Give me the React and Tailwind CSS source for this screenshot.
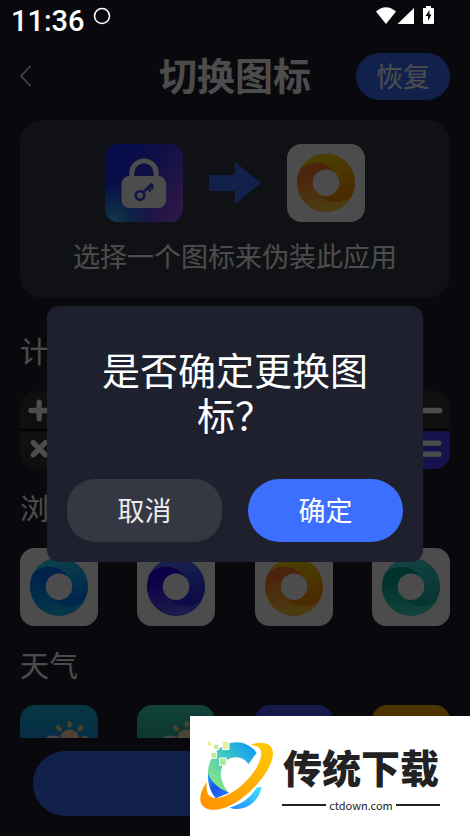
import React, {useId} from "react";

const browserIcons = [
    {name: "蓝色", from: "#22d0f8", to: "#0080ff", innerFrom: "#0074ff", innerTo: "#14bbf5"},
    {name: "紫色", from: "#5070ff", to: "#2a22f0", innerFrom: "#2400f0", innerTo: "#645dff"},
    {name: "橙色", from: "#f7d000", to: "#fd8c00", innerFrom: "#ff7a30", innerTo: "#ffcc38"},
    {name: "青色", from: "#3cdcd6", to: "#14b0aa", innerFrom: "#00a592", innerTo: "#3ce0cc"},
];

const weatherIcons = [
    {name: "蓝色", from: "#1ab8e8", to: "#1488e0"},
    {name: "绿色", from: "#3cdcc0", to: "#20b090"},
    {name: "紫色", from: "#5057fd", to: "#3038e0"},
    {name: "黄色", from: "#fdb400", to: "#f09000"},
];

function RingIcon({icon}) {
    const id = useId();

    return (
        <svg viewBox="0 0 236 236" className="block w-full">
            <defs>
                <linearGradient id={`${id}a`} x1="0.4" y1="0" x2="0.7" y2="1">
                    <stop offset="0.1" stopColor={icon.from}/>
                    <stop offset="0.8" stopColor={icon.to}/>
                </linearGradient>
                <linearGradient id={`${id}b`} x1="0.3" y1="0.1" x2="0.5" y2="1">
                    <stop offset="0.1" stopColor={icon.innerFrom}/>
                    <stop offset="1" stopColor={icon.innerTo}/>
                </linearGradient>
            </defs>
            <rect width="236" height="236" rx="44" fill="#fff"/>
            <circle cx="118" cy="117" r="88" fill={`url(#${id}a)`}/>
            <path d="M40 76C66 50 122 46 150 93L118 117L90 146C112 180 165 187 197 156A88 88 0 0 1 40 76Z" fill={`url(#${id}b)`}/>
            <circle cx="118" cy="117" r="40" fill="#fff"/>
        </svg>
    );
}

function WeatherIcon({icon}) {
    const id = useId();

    return (
        <svg viewBox="0 0 236 236" className="block w-full">
            <defs>
                <linearGradient id={id} x1="0" y1="0" x2="0" y2="1">
                    <stop offset="0" stopColor={icon.from}/>
                    <stop offset="0.6" stopColor={icon.to}/>
                </linearGradient>
            </defs>
            <rect width="236" height="236" rx="46" fill={`url(#${id})`}/>
            <g stroke="#ffd98a" strokeWidth="12" strokeLinecap="round">
                <path d="M150 55V62M115 67L121 74M186 67L179 74M192 100H200"/>
            </g>
            <circle cx="150" cy="103" r="29" fill="#ffe2ae"/>
            <path d="M52 160a32 32 0 0 1 14-45a36 36 0 0 1 66-2a40 40 0 0 1 52 40a24 24 0 0 1-14 40H80a28 28 0 0 1-28-33Z" fill="#f0f0f2"/>
        </svg>
    );
}

function CalculatorIcon() {
    const id = useId();

    return (
        <svg viewBox="0 0 236 236" className="block w-full">
            <clipPath id={id}>
                <rect width="236" height="236" rx="46"/>
            </clipPath>
            <g clipPath={`url(#${id})`}>
                <rect width="236" height="236" fill="#0a0a0a"/>
                <path d="M0 0H236V114H0ZM0 122H114V236H0Z" fill="#343434"/>
                <path d="M122 122H236V236H122Z" fill="#4a3fff"/>
                <g stroke="#fff" strokeWidth="16" strokeLinecap="round">
                    <path d="M58 34V84M33 59H83M153 59H205M40 156L77 193M77 156L40 193M155 158H202M155 191H202"/>
                </g>
            </g>
        </svg>
    );
}

function LockIcon() {
    return (
        <svg viewBox="0 0 236 236" className="block w-full">
            <defs>
                <linearGradient id="lock-base" x1="0" y1="0.2" x2="1" y2="0.8">
                    <stop offset="0.1" stopColor="#1426f4"/>
                    <stop offset="0.5" stopColor="#3535e8"/>
                    <stop offset="1" stopColor="#9a50ee"/>
                </linearGradient>
                <radialGradient id="lock-corner" cx="0.1" cy="1" r="0.6">
                    <stop offset="0" stopColor="#2cc8f0"/>
                    <stop offset="1" stopColor="#2c68f0" stopOpacity="0"/>
                </radialGradient>
            </defs>
            <rect width="236" height="236" rx="40" fill="url(#lock-base)"/>
            <rect width="236" height="236" rx="40" fill="url(#lock-corner)"/>
            <path d="M81 104V88A37 37 0 0 1 155 88V104" fill="none" stroke="#fff" strokeWidth="15"/>
            <rect x="50" y="97" width="135" height="97" rx="24" fill="#fff"/>
            <g fill="none" stroke="#4248e0" strokeWidth="8">
                <circle cx="106" cy="156" r="13"/>
                <path d="M115 147L142 120M129 133L138 143M136 126L146 136M140 122L146 128"/>
            </g>
        </svg>
    );
}

function StatusBar() {
    return (
        <div className="relative z-20 flex h-8 items-start justify-between pl-[11px] pr-9 text-white">
            <div className="flex items-start gap-2">
                <span className="pt-1 font-['Roboto',sans-serif] text-[29px] font-medium leading-[34px]">11:36</span>
                <svg viewBox="0 0 18 18" className="mt-[7px] size-[18px]">
                    <circle cx="9" cy="9" r="7.5" fill="none" stroke="currentColor" strokeWidth="1.6"/>
                </svg>
            </div>
            <svg viewBox="0 0 58 18" className="mt-[6px] h-[18px] w-[58px]" fill="currentColor">
                <path d="M0 5.500Q10 -3 20 5.500L10 18Z"/>
                <path d="M38 2V18H21.500Z"/>
                <path fillRule="evenodd" d="M47 2H50V0H55V2H57Q58 2 58 3V17Q58 18 57 18H48Q47 18 47 17ZM53.500 4L49.500 10H52V15L55.500 8.500H53.500Z"/>
            </svg>
        </div>
    );
}

function Section({title, children}) {
    return (
        <section className="mb-[17px]">
            <h2 className="mb-5 text-[29px] leading-[42px] text-white">{title}</h2>
            <div className="flex justify-between">{children}</div>
        </section>
    );
}

function IconButton({label, children}) {
    return (
        <button type="button" aria-label={label} className="w-[78px]">{children}</button>
    );
}

function SiteLogo() {
    return (
        <svg viewBox="45 90 222 216" className="h-[72px] w-[74px] shrink-0">
            <defs>
                <linearGradient id="logo-c" x1="0.95" y1="0.1" x2="0.1" y2="0.9">
                    <stop offset="0" stopColor="#0c9cf5"/>
                    <stop offset="0.45" stopColor="#3cc4c8"/>
                    <stop offset="1" stopColor="#8eea78"/>
                </linearGradient>
                <linearGradient id="logo-ring" x1="1" y1="0" x2="0" y2="1">
                    <stop offset="0" stopColor="#ffcb05"/>
                    <stop offset="1" stopColor="#ff8f00"/>
                </linearGradient>
                <linearGradient id="logo-tail" x1="0" y1="1" x2="1" y2="0">
                    <stop offset="0" stopColor="#2288ff"/>
                    <stop offset="1" stopColor="#42e4ff"/>
                </linearGradient>
                <linearGradient id="logo-side" x1="0" y1="0" x2="0.5" y2="1">
                    <stop offset="0" stopColor="#28a8ff"/>
                    <stop offset="0.6" stopColor="#1c50ea"/>
                    <stop offset="1" stopColor="#2470ff"/>
                </linearGradient>
            </defs>
            <path d="M215 128C195 102 165 92 136 99C96 108 66 152 69 196C75 225 100 250 131 248C108 220 101 190 114 164C130 136 174 134 190 163Z" fill="url(#logo-c)"/>
            <path d="M69 189C67 220 78 250 93 265L133 248C106 238 80 220 69 189Z" fill="url(#logo-side)"/>
            <path d="M133 293C170 285 202 257 214 233L230 231C222 276 178 308 133 293Z" fill="url(#logo-tail)"/>
            <path d="M197 104C235 91 265 99 264 132C262 180 200 252 140 284C95 308 48 304 46 269C45 250 55 230 66 215C61 242 67 263 92 264C122 265 165 236 194 202C224 167 238 127 222 113C215 107 207 107 197 104Z" fill="url(#logo-ring)"/>
            <g stroke="#fff" strokeWidth="3">
                <path d="M67 94H80V108H67Z" fill="#e6f08c"/>
                <path d="M86 103H101V118H86Z" fill="#bcec92"/>
                <path d="M112 94H132V119H112Z" fill="#e4f29a"/>
                <path d="M78 127H95V145H78Z" fill="#b8ec98"/>
                <path d="M104 144H124V166H104Z" fill="#a8e89a"/>
            </g>
        </svg>
    );
}

function SiteBanner() {
    return (
        <div className="absolute bottom-0 right-0 z-30 flex h-[120px] w-[280px] items-center gap-2 bg-white pl-[10px] text-[#222]">
            <SiteLogo/>
            <div className="flex w-[158px] flex-col items-center gap-2 pt-1">
                <strong className="whitespace-nowrap text-[39px] font-black leading-[46px]">传统下载</strong>
                <div className="flex w-full items-center gap-[3px]">
                    <span className="h-[2px] flex-1 bg-[#222]"/>
                    <a href="#ctdown" className="text-[11px] leading-4">ctdown.com</a>
                    <span className="h-[2px] flex-1 bg-[#222]"/>
                </div>
            </div>
        </div>
    );
}

function ConfirmDialog() {
    return (
        <div className="absolute inset-0 z-10 flex items-center justify-center bg-black/70 pt-8">
            <div role="dialog" aria-modal="true" aria-labelledby="confirm-title" className="w-4/5 rounded-xl bg-[#1e212d] px-5 pb-5 pt-10">
                <p id="confirm-title" className="px-5 text-center text-[38px] leading-[45px] text-white">是否确定更换图标？</p>
                <div className="mt-[43px] flex gap-[26px]">
                    <button type="button" className="h-[63px] flex-1 rounded-[28px] bg-[#353843] text-[27px] text-[#ebebec]">取消</button>
                    <button type="button" className="h-[63px] flex-1 rounded-full bg-[#3d6fff] text-[27px] text-white">确定</button>
                </div>
            </div>
        </div>
    );
}

export default function App() {
    return (
        <div className="relative flex h-screen flex-col overflow-hidden bg-[#1e212e] font-['Noto_Sans_CJK_SC',sans-serif]">
            <StatusBar/>
            <header className="grid h-[88px] shrink-0 grid-cols-[1fr_auto_1fr] items-center px-5">
                <button type="button" aria-label="返回" className="justify-self-start">
                    <svg viewBox="0 0 12 22" className="h-[22px] w-3" fill="none" stroke="#fff" strokeWidth="1.5">
                        <path d="M10.500 1L1 11L10.500 21"/>
                    </svg>
                </button>
                <h1 className="pb-1 text-[38px] font-bold leading-[48px] text-white">切换图标</h1>
                <button type="button" className="h-[47px] w-[94px] justify-self-end rounded-full bg-[#3d6fff] text-[27px] text-white">恢复</button>
            </header>
            <main className="min-h-0 flex-1 overflow-hidden px-5">
                <div className="mb-[31px] rounded-[22px] bg-[#373a44] py-6">
                    <div className="flex items-center justify-center gap-[26px]">
                        <div className="w-[78px]"><LockIcon/></div>
                        <svg viewBox="0 0 52 42" className="h-[42px] w-[52px]" fill="#3d6fff">
                            <path d="M0 13H26V0L52 21L26 42V29H0Z"/>
                        </svg>
                        <div className="w-[78px]"><RingIcon icon={browserIcons[2]}/></div>
                    </div>
                    <p className="mt-4 text-center text-[27px] leading-9 text-white">选择一个图标来伪装此应用</p>
                </div>
                <Section title="计算器">
                    {[1, 2, 3, 4].map(n => (
                        <IconButton key={n} label={`计算器 ${n}`}><CalculatorIcon/></IconButton>
                    ))}
                </Section>
                <Section title="浏览器">
                    {browserIcons.map(icon => (
                        <IconButton key={icon.name} label={`浏览器 ${icon.name}`}><RingIcon icon={icon}/></IconButton>
                    ))}
                </Section>
                <Section title="天气">
                    {weatherIcons.map(icon => (
                        <IconButton key={icon.name} label={`天气 ${icon.name}`}><WeatherIcon icon={icon}/></IconButton>
                    ))}
                </Section>
            </main>
            <footer className="shrink-0 px-[33px] pb-5 pt-[13px]">
                <button type="button" aria-label="更换图标" className="block h-[65px] w-full rounded-full bg-[#3d6fff]"/>
            </footer>
            <ConfirmDialog/>
            <SiteBanner/>
        </div>
    );
}
